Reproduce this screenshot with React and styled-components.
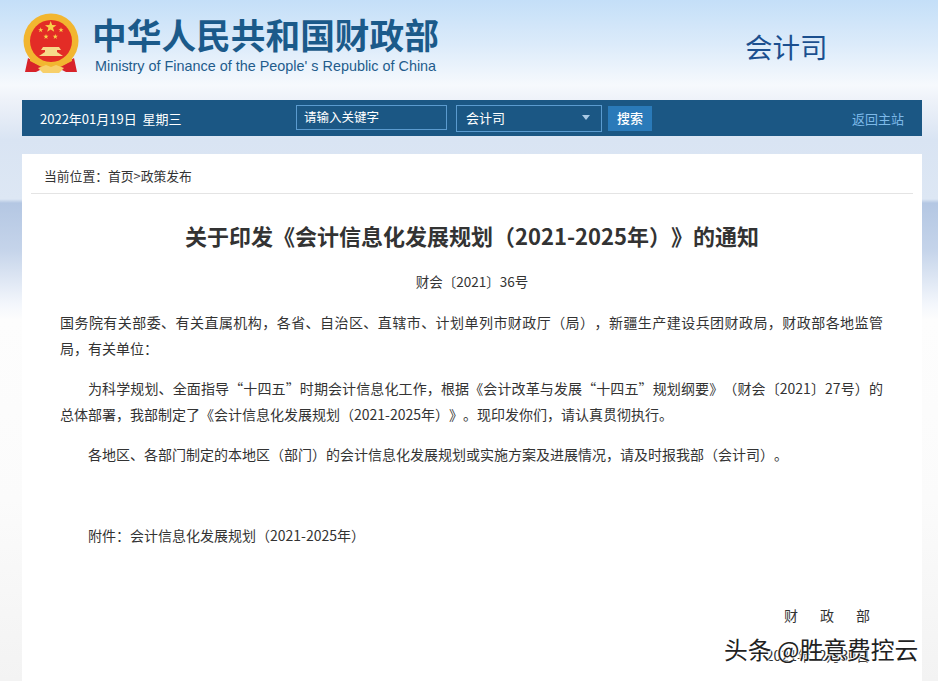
import React from 'react';
import styled, { createGlobalStyle } from 'styled-components';

const GlobalStyle = createGlobalStyle`
    html, body {
        margin: 0;
        height: 681px;
        overflow: hidden;
    }

    body {
        font-family: "Noto Sans CJK SC", "Liberation Sans", sans-serif;
        color: #333;
        text-spacing-trim: space-all;
    }
`;

const Page = styled.div`
    position: relative;
    width: 938px;
    height: 681px;
    overflow: hidden;
    padding-left: 22px;
    box-sizing: border-box;
    background: linear-gradient(
        180deg,
        #c4dff8 0px,
        #dcebfa 45px,
        #f6f9fd 85px,
        #eef2f9 100px,
        #d9e4f3 140px,
        #dde7f4 199px,
        #b4c7e3 203px,
        #c5d4ea 250px,
        #f4f7fc 305px,
        #fdfdfd 320px,
        #fbfbfb 500px,
        #f3f3f3 681px
    );
`;

const Header = styled.header`
    height: 100px;
    display: flex;
    align-items: flex-start;
`;

const Emblem = styled.svg`
    width: 58px;
    height: 62px;
    margin: 12px 12px 0 0;
    flex: none;
`;

const Brand = styled.div`
    display: flex;
    flex-direction: column;
    width: 360px;
    padding-top: 11px;
`;

const BrandCn = styled.div`
    font-size: 34.7px;
    line-height: 47px;
    font-weight: 700;
    color: #1b5a8a;
    white-space: nowrap;
`;

const BrandEn = styled.div`
    font-family: "Liberation Sans", sans-serif;
    font-size: 14.4px;
    line-height: 16px;
    margin-left: 3px;
    color: #1f5c8c;
    white-space: nowrap;
`;

const Department = styled.div`
    margin: 26px 0 0 293px;
    font-size: 27.5px;
    line-height: 40px;
    color: #1b4f8f;
    white-space: nowrap;
`;

const Bar = styled.div`
    width: 900px;
    height: 36px;
    background: #1b5784;
    display: flex;
    align-items: center;
    padding: 0 18px;
    box-sizing: border-box;
    color: #fff;
    font-size: 13px;
`;

const DateText = styled.div`
    width: 256px;
    flex: none;
    white-space: pre;
`;

const SearchBox = styled.div`
    width: 151px;
    height: 25px;
    margin-top: -1px;
    border: 1px solid #5b9bcf;
    box-sizing: border-box;
    padding-left: 7px;
    line-height: 22px;
    font-size: 12.5px;
`;

const SelectBox = styled.div`
    width: 146px;
    height: 27px;
    margin: 0 6px 0 9px;
    border: 1px solid #5b9bcf;
    box-sizing: border-box;
    padding: 0 11px 2px 9px;
    display: flex;
    align-items: center;
    justify-content: space-between;
    font-size: 13px;
`;

const Caret = styled.span`
    width: 0;
    height: 0;
    border-left: 4px solid transparent;
    border-right: 4px solid transparent;
    border-top: 5px solid #a9c9e4;
`;

const SearchButton = styled.div`
    width: 44px;
    height: 25px;
    background: #2a7ab9;
    text-align: center;
    line-height: 24px;
    font-size: 13px;
    font-weight: 500;
`;

const BackLink = styled.div`
    margin-left: auto;
    color: #7db9e8;
    font-size: 13px;
`;

const Card = styled.main`
    width: 900px;
    margin-top: 18px;
    height: 560px;
    background: #fff;
    padding: 0 9px;
    box-sizing: border-box;
`;

const Crumb = styled.div`
    height: 40px;
    padding: 12px 0 0 13px;
    box-sizing: border-box;
    border-bottom: 1px solid #e4e4e4;
    font-size: 12.8px;
    line-height: 19px;
    color: #333;
`;

const Title = styled.h1`
    margin: 25px 0 0;
    text-align: center;
    font-size: 22px;
    line-height: 32px;
    font-weight: 700;
    color: #333;
`;

const DocNo = styled.div`
    margin-top: 20px;
    text-align: center;
    font-size: 13.5px;
    line-height: 20px;
`;

const Body = styled.div`
    margin-top: 18px;
    padding: 0 30px 0 29px;
`;

const Para = styled.p`
    margin: 0 0 14px;
    min-height: ${(props) => (props.$blank ? 27 : 26)}px;
    font-size: 14px;
    line-height: 26px;
    text-align: justify;
    text-indent: ${(props) => (props.$indent ? '28px' : '0')};
`;

const Signature = styled.div`
    display: flex;
    justify-content: flex-end;
    gap: ${(props) => props.$gap || 0}px;
    padding-right: 13px;
    margin-bottom: 14px;
    font-size: 14px;
    line-height: 26px;
`;

const Watermark = styled.div`
    position: absolute;
    left: 724px;
    top: 633px;
    font-size: 23.8px;
    line-height: 32px;
    color: #222;
    white-space: nowrap;
    text-shadow: 1px 1px 1px #fff, -1px -1px 1px #fff;
`;

// full-width punctuation kept as escapes: \uFF0C comma, \uFF1A colon, \uFF08 \uFF09 brackets
const crumb = '当前位置\uFF1A首页>政策发布';
const title = '关于印发《会计信息化发展规划\uFF082021-2025年\uFF09》的通知';
const paragraphs = [
    { text: '国务院有关部委、有关直属机构\uFF0C各省、自治区、直辖市、计划单列市财政厅\uFF08局\uFF09\uFF0C新疆生产建设兵团财政局\uFF0C财政部各地监管局\uFF0C有关单位\uFF1A' },
    { indent: true, text: '为科学规划、全面指导“十四五”时期会计信息化工作\uFF0C根据《会计改革与发展“十四五”规划纲要》\uFF08财会〔2021〕27号\uFF09的总体部署\uFF0C我部制定了《会计信息化发展规划\uFF082021-2025年\uFF09》。现印发你们\uFF0C请认真贯彻执行。' },
    { indent: true, text: '各地区、各部门制定的本地区\uFF08部门\uFF09的会计信息化发展规划或实施方案及进展情况\uFF0C请及时报我部\uFF08会计司\uFF09。' },
    { blank: true, text: '' },
    { indent: true, text: '附件\uFF1A会计信息化发展规划\uFF082021-2025年\uFF09' },
    { text: '' },
];

const smallStars = [
    [18.7, 18],
    [39, 18],
    [24, 24.7],
    [33.3, 24.7],
];

function starPoints(cx, cy, r) {
    const points = [];
    for (let i = 0; i < 10; i++) {
        const radius = i % 2 === 0 ? r : r * 0.4;
        const angle = (Math.PI / 5) * i - Math.PI / 2;
        points.push(`${cx + radius * Math.cos(angle)},${cy + radius * Math.sin(angle)}`);
    }
    return points.join(' ');
}

function StateEmblem() {
    return (
        <Emblem viewBox="0 0 58 62">
            <path d="M6 46 L3 60 L14 60 L20 57 L38 57 L44 60 L55 60 L52 46 L42 52 L16 52 Z" fill="#d8232a" />
            <circle cx="29" cy="29" r="27.5" fill="#f2b630" />
            <circle cx="29" cy="29" r="21" fill="#e32c26" />
            <polygon points={starPoints(28.7, 15, 6)} fill="#f8d24a" />
            {smallStars.map(([x, y]) => (
                <polygon key={x + '-' + y} points={starPoints(x, y, 2.7)} fill="#f8d24a" />
            ))}
            <path d="M21 35 L37 35 L39 38 L35 38 L35 40 L41 44 L17 44 L23 40 L23 38 L19 38 Z" fill="#f7d98a" />
            <path d="M8 44 Q18 50 29 50 Q40 50 50 44 L50 49 Q40 55 29 54 Q18 55 8 49 Z" fill="#f2b630" />
            <path d="M16 56 L24 53 L29 55 L34 53 L42 56 L37 61 L21 61 Z" fill="#f7cf6a" />
        </Emblem>
    );
}

function App() {
    return (
        <Page lang="zh-CN">
            <GlobalStyle />
            <Header>
                <StateEmblem />
                <Brand>
                    <BrandCn>中华人民共和国财政部</BrandCn>
                    <BrandEn>Ministry of Finance of the People' s Republic of China</BrandEn>
                </Brand>
                <Department>会计司</Department>
            </Header>
            <Bar>
                <DateText>2022年01月19日  星期三</DateText>
                <SearchBox>请输入关键字</SearchBox>
                <SelectBox>
                    会计司
                    <Caret />
                </SelectBox>
                <SearchButton>搜索</SearchButton>
                <BackLink>返回主站</BackLink>
            </Bar>
            <Card>
                <Crumb>{crumb}</Crumb>
                <Title>{title}</Title>
                <DocNo>财会〔2021〕36号</DocNo>
                <Body>
                    {paragraphs.map((item, index) => (
                        <Para key={index} $indent={item.indent} $blank={item.blank}>{item.text}</Para>
                    ))}
                    <Signature $gap={22}>
                        <span>财</span>
                        <span>政</span>
                        <span>部</span>
                    </Signature>
                    <Signature>2021年12月30日</Signature>
                </Body>
            </Card>
            <Watermark>头条 @胜意费控云</Watermark>
        </Page>
    );
}

export default App;
